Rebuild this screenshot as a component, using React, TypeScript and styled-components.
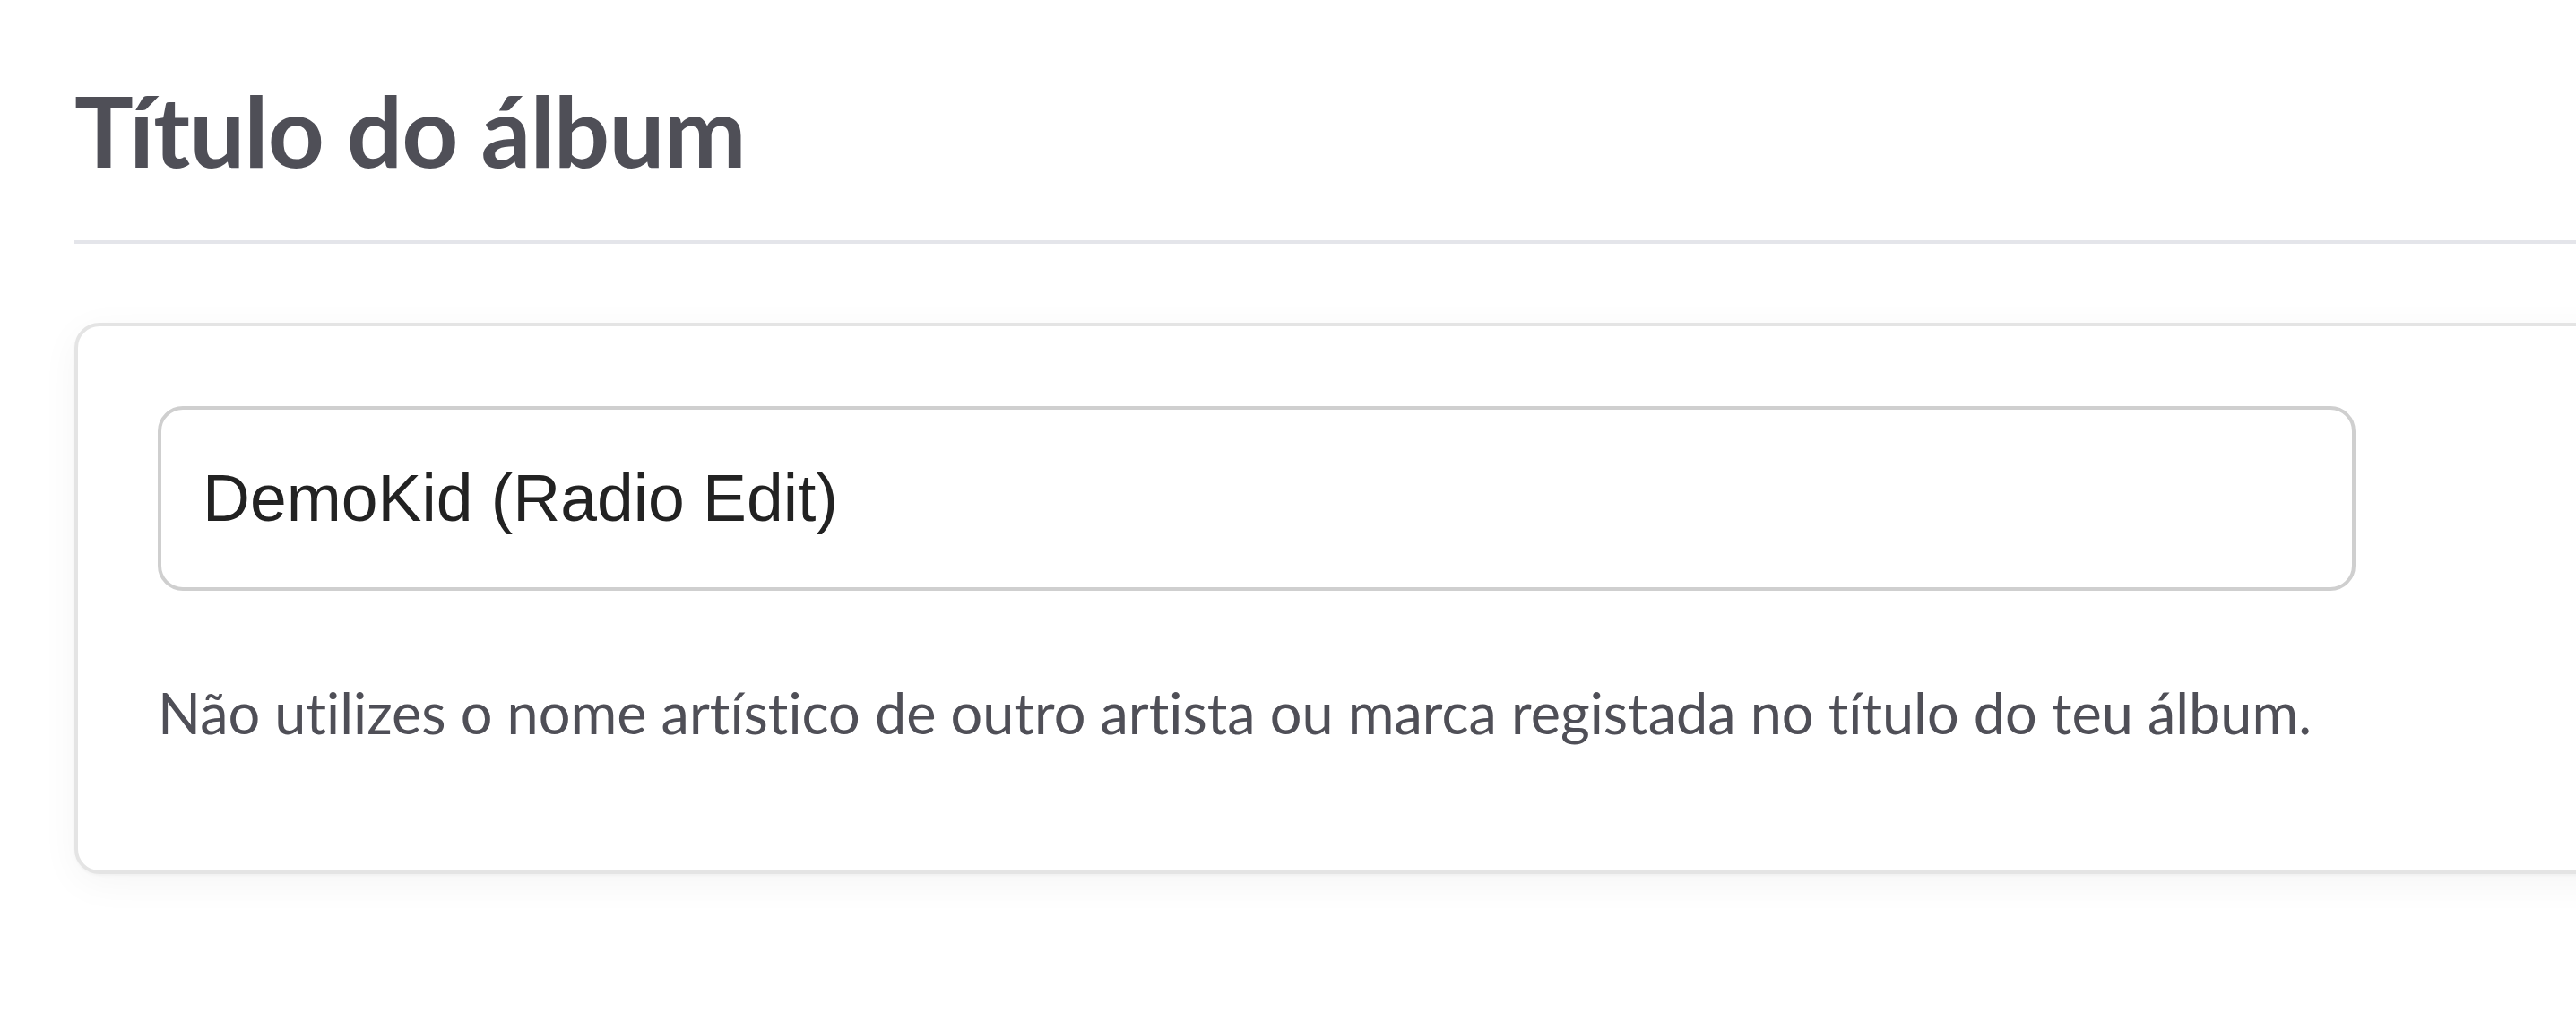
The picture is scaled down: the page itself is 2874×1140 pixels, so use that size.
import React from "react";
import styled, { createGlobalStyle } from "styled-components";

const GlobalStyle = createGlobalStyle`
  html, body {
    margin: 0;
    padding: 0;
    background: #ffffff;
    overflow: hidden;
  }
  #root {
    overflow: hidden;
  }
`;

const Page = styled.main`
  display: flex;
  flex-direction: column;
  padding: 78px 0 120px 83px;
  margin-right: -240px;
  font-family: Lato, "Liberation Sans", sans-serif;
  font-variant-ligatures: none;
`;

const Header = styled.header`
  display: flex;
  flex-direction: column;
`;

const Title = styled.h1`
  margin: 0;
  padding: 0 0 58px;
  font-family: Lato, "Liberation Sans", sans-serif;
  font-weight: 700;
  font-size: 110px;
  line-height: 1.2;
  letter-spacing: -0.9px;
  font-variant-ligatures: none;
  color: #4f4f57;
`;

const Divider = styled.hr`
  margin: 0;
  border: none;
  height: 4px;
  background: #e4e5ea;
`;

const Card = styled.section`
  margin-top: 88px;
  display: flex;
  flex-direction: column;
  background: #ffffff;
  border: 4px solid #e4e4e4;
  border-radius: 28px;
  padding: 89px 89px 138px;
  box-shadow: 0 10px 44px rgba(0, 0, 0, 0.045), 0 2px 3px rgba(0, 0, 0, 0.03);
`;

const TextInput = styled.input`
  box-sizing: border-box;
  width: 2452px;
  height: 206px;
  padding: 0 46px;
  border: 4px solid #cfcfcf;
  border-radius: 28px;
  background: #ffffff;
  font-family: "Liberation Sans", Arial, sans-serif;
  font-size: 73.3px;
  color: #222222;
  outline: none;
`;

const Hint = styled.p`
  margin: 98px 0 0;
  font-family: Lato, "Liberation Sans", sans-serif;
  font-weight: 400;
  font-size: 63px;
  line-height: 1.2;
  font-variant-ligatures: none;
  color: #4f4f57;
`;

export default function App() {
  return (
    <>
      <GlobalStyle />
      <Page>
        <Header>
          <Title>Título do álbum</Title>
          <Divider />
        </Header>
        <Card>
          <TextInput defaultValue="DemoKid (Radio Edit)" aria-label="Título do álbum" />
          <Hint>
            Não utilizes o nome artístico de outro artista ou marca registada no título do teu álbum.
          </Hint>
        </Card>
      </Page>
    </>
  );
}
